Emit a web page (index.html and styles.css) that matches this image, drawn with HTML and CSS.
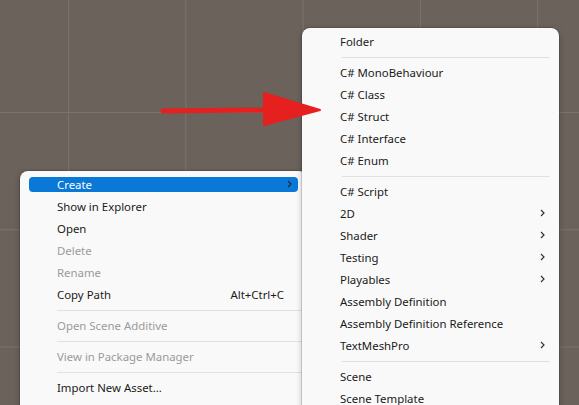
FILE: index.html
```html
<!DOCTYPE html>
<html>
<head>
<meta charset="utf-8">
<link rel="stylesheet" href="styles.css">
</head>
<body>
<div class="canvas">
  <div class="menu menu-main">
    <div class="item active"><span class="label">Create</span><svg class="chev" viewBox="0 0 5 8"><path d="M1 1 L4 4 L1 7"/></svg></div>
    <div class="item"><span class="label">Show in Explorer</span></div>
    <div class="item"><span class="label">Open</span></div>
    <div class="item disabled"><span class="label">Delete</span></div>
    <div class="item disabled"><span class="label">Rename</span></div>
    <div class="item"><span class="label">Copy Path</span><span class="shortcut">Alt+Ctrl+C</span></div>
    <div class="sep"></div>
    <div class="item disabled"><span class="label">Open Scene Additive</span></div>
    <div class="sep"></div>
    <div class="item disabled"><span class="label">View in Package Manager</span></div>
    <div class="sep"></div>
    <div class="item"><span class="label">Import New Asset...</span></div>
  </div>
  <div class="menu menu-sub">
    <div class="item"><span class="label">Folder</span></div>
    <div class="sep"></div>
    <div class="item"><span class="label">C# MonoBehaviour</span></div>
    <div class="item"><span class="label">C# Class</span></div>
    <div class="item"><span class="label">C# Struct</span></div>
    <div class="item"><span class="label">C# Interface</span></div>
    <div class="item"><span class="label">C# Enum</span></div>
    <div class="sep"></div>
    <div class="item"><span class="label">C# Script</span></div>
    <div class="item"><span class="label">2D</span><svg class="chev" viewBox="0 0 5 8"><path d="M1 1 L4 4 L1 7"/></svg></div>
    <div class="item"><span class="label">Shader</span><svg class="chev" viewBox="0 0 5 8"><path d="M1 1 L4 4 L1 7"/></svg></div>
    <div class="item"><span class="label">Testing</span><svg class="chev" viewBox="0 0 5 8"><path d="M1 1 L4 4 L1 7"/></svg></div>
    <div class="item"><span class="label">Playables</span><svg class="chev" viewBox="0 0 5 8"><path d="M1 1 L4 4 L1 7"/></svg></div>
    <div class="item"><span class="label">Assembly Definition</span></div>
    <div class="item"><span class="label">Assembly Definition Reference</span></div>
    <div class="item"><span class="label">TextMeshPro</span><svg class="chev" viewBox="0 0 5 8"><path d="M1 1 L4 4 L1 7"/></svg></div>
    <div class="sep"></div>
    <div class="item"><span class="label">Scene</span></div>
    <div class="item"><span class="label">Scene Template</span></div>
  </div>
  <svg class="arrow" viewBox="0 0 170 40" width="170" height="40">
    <path d="M5 23 L110 22" stroke="#e5201e" stroke-width="5" stroke-linecap="round" fill="none"/>
    <path d="M106 5 L162 22 L106 37 Z" fill="#e5201e" stroke="#e5201e" stroke-width="2" stroke-linejoin="round"/>
  </svg>
</div>
</body>
</html>
```

FILE: styles.css
```css
html, body {
  margin: 0;
  padding: 0;
}
body {
  width: 579px;
  height: 405px;
  overflow: hidden;
  font-family: "Noto Sans", "Open Sans", sans-serif;
  font-size: 11.4px;
}
.canvas {
  position: relative;
  width: 579px;
  height: 405px;
  overflow: hidden;
  background-color: #6a625b;
  background-image:
    linear-gradient(to right, #7b736c 1px, transparent 1px),
    linear-gradient(to bottom, #7b736c 1px, transparent 1px);
  background-size: 117.3px 117.3px;
  background-position: 68px 112px;
}
.menu {
  position: absolute;
  background: #f9f9f9;
  border-radius: 8px;
  box-shadow: 0 0 0 1px rgba(0,0,0,0.12), 0 2px 6px rgba(0,0,0,0.25);
  display: flex;
  flex-direction: column;
}
.menu-main {
  left: 20px;
  top: 171px;
  width: 287px;
  padding: 3px 0 20px 0;
}
.menu-sub {
  left: 302px;
  top: 28px;
  width: 257px;
  padding: 3px 0 10px 0;
}
.item {
  height: 22px;
  box-sizing: border-box;
  padding-bottom: 2px;
  display: flex;
  align-items: center;
  color: #1a1a1a;
  position: relative;
}
.menu-main .item {
  margin: 0 9px;
  padding-left: 28px;
  padding-right: 8px;
}
.menu-sub .item {
  padding-left: 38px;
  padding-right: 14px;
}
.label {
  flex: 1;
  white-space: nowrap;
}
.item.disabled {
  color: #9b9b9b;
}
.item.active {
  color: #ffffff;
}
.item.active::before {
  content: "";
  position: absolute;
  left: 0;
  right: 0;
  top: 3px;
  bottom: 4px;
  background: #0a78d6;
  border-radius: 4px;
  z-index: 0;
}
.item.active .label, .item.active .chev {
  position: relative;
  z-index: 1;
}
.shortcut {
  white-space: nowrap;
  color: #1a1a1a;
  margin-right: 6px;
}
.chev {
  width: 5px;
  height: 8px;
  fill: none;
  stroke: #333333;
  stroke-width: 1.2;
}
.item.active .chev {
  stroke: #1b2a4a;
  margin-right: -2px;
}
.sep {
  height: 9px;
  display: flex;
  align-items: center;
}
.sep::after {
  content: "";
  display: block;
  height: 1px;
  background: #e1e1e1;
  flex: 1;
}
.menu-main .sep {
  margin: 0 0 0 37px;
}
.menu-sub .sep {
  margin: 0 9px 0 40px;
}
.arrow {
  position: absolute;
  left: 158px;
  top: 88px;
}
```
